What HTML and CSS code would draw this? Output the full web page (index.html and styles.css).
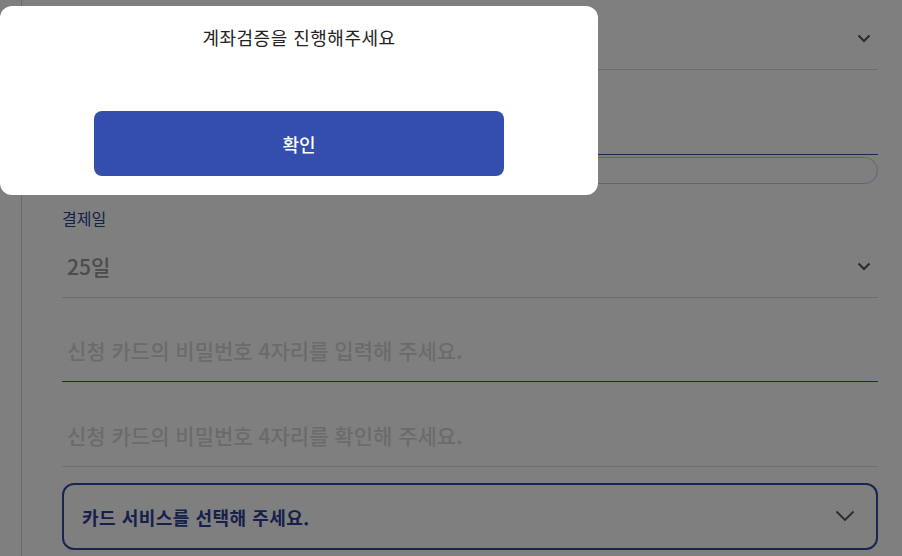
FILE: index.html
```html
<!DOCTYPE html>
<html lang="ko">
<head>
<meta charset="utf-8">
<title>계좌검증</title>
<link rel="stylesheet" href="styles.css">
</head>
<body>
<div class="page">
  <div class="form">
    <div class="field select first">
      <span class="value"></span>
      <svg class="chev" width="14" height="9" viewBox="0 0 14 9"><polyline points="1.5,1.5 7,7 12.5,1.5" fill="none" stroke="#555" stroke-width="2"/></svg>
    </div>
    <div class="field input focus"></div>
    <div class="pill"></div>
    <div class="label">결제일</div>
    <div class="field select day">
      <span class="value">25일</span>
      <svg class="chev" width="14" height="9" viewBox="0 0 14 9"><polyline points="1.5,1.5 7,7 12.5,1.5" fill="none" stroke="#555" stroke-width="2"/></svg>
    </div>
    <div class="field text focus pw1"><span class="ph">신청 카드의 비밀번호 4자리를 입력해 주세요.</span></div>
    <div class="field text pw2"><span class="ph">신청 카드의 비밀번호 4자리를 확인해 주세요.</span></div>
    <div class="service">
      <span class="service-text">카드 서비스를 선택해 주세요.</span>
      <svg class="chev-lg" width="20" height="12" viewBox="0 0 20 12"><polyline points="1.5,1.5 10,10 18.5,1.5" fill="none" stroke="#555" stroke-width="1.8"/></svg>
    </div>
  </div>
</div>
<div class="overlay"></div>
<div class="modal">
  <p class="modal-title">계좌검증을 진행해주세요</p>
  <button class="modal-btn">확인</button>
</div>
</body>
</html>
```
FILE: styles.css
```css
* { box-sizing: border-box; }
html, body { margin: 0; padding: 0; }
body {
  width: 902px;
  height: 556px;
  overflow: hidden;
  background: #fff;
  font-family: "Noto Sans CJK KR", "Noto Sans", sans-serif;
  color: #222;
}
.page {
  margin-left: 21px;
  border-left: 1px solid #d4d4d4;
  padding: 0 24px 0 40px;
  height: 556px;
}
.form { display: flex; flex-direction: column; }
.field {
  display: flex;
  border-bottom: 1px solid #d8d8d8;
}
.select { align-items: center; justify-content: space-between; }
.chev { margin-right: 7px; display: block; }
.first { height: 70px; padding-top: 7px; }
.input { height: 85px; }
.focus { border-bottom-color: #334eac; }
.pill {
  margin-top: 2px;
  height: 27px;
  border: 1px solid #b4cfe6;
  border-radius: 14px;
}
.label {
  margin-top: 23px;
  font-size: 16px;
  line-height: 22px;
  color: #2d3f8f;
}
.day { height: 69px; padding-top: 6px; }
.value {
  padding-left: 5px;
  font-size: 21px;
  font-weight: 500;
  color: #999;
  line-height: 30px;
}
.text { align-items: flex-end; padding-bottom: 16px; padding-left: 5px; }
.pw1 { height: 84px; }
.pw2 { height: 85px; border-bottom-color: #dcdce4; }
.ph {
  font-size: 21px;
  line-height: 30px;
  color: #d6d6da;
  font-weight: 500;
}
.service {
  margin-top: 16px;
  height: 67px;
  border: 2px solid #33489e;
  border-radius: 12px;
  display: flex;
  align-items: center;
  justify-content: space-between;
  padding: 0 21px 0 18px;
}
.service-text {
  font-size: 18px;
  letter-spacing: 0.5px;
  font-weight: 700;
  color: #2e4196;
  line-height: 26px;
}
.chev-lg { display: block; margin-top: -2px; }
.overlay {
  position: fixed;
  inset: 0;
  background: rgba(0, 0, 0, 0.5);
}
.modal {
  position: absolute;
  left: 0;
  top: 6px;
  width: 598px;
  height: 189px;
  background: #fff;
  border-radius: 12px;
  padding: 18px 94px 19px;
  display: flex;
  flex-direction: column;
  align-items: center;
}
.modal-title {
  margin: 0;
  font-size: 18px;
  letter-spacing: 0.5px;
  line-height: 26px;
  color: #222;
}
.modal-btn {
  margin-top: 61px;
  width: 410px;
  height: 65px;
  border: 0;
  border-radius: 8px;
  background: #334eac;
  color: #fff;
  font-family: inherit;
  font-size: 18px;
  font-weight: 500;
}
```
